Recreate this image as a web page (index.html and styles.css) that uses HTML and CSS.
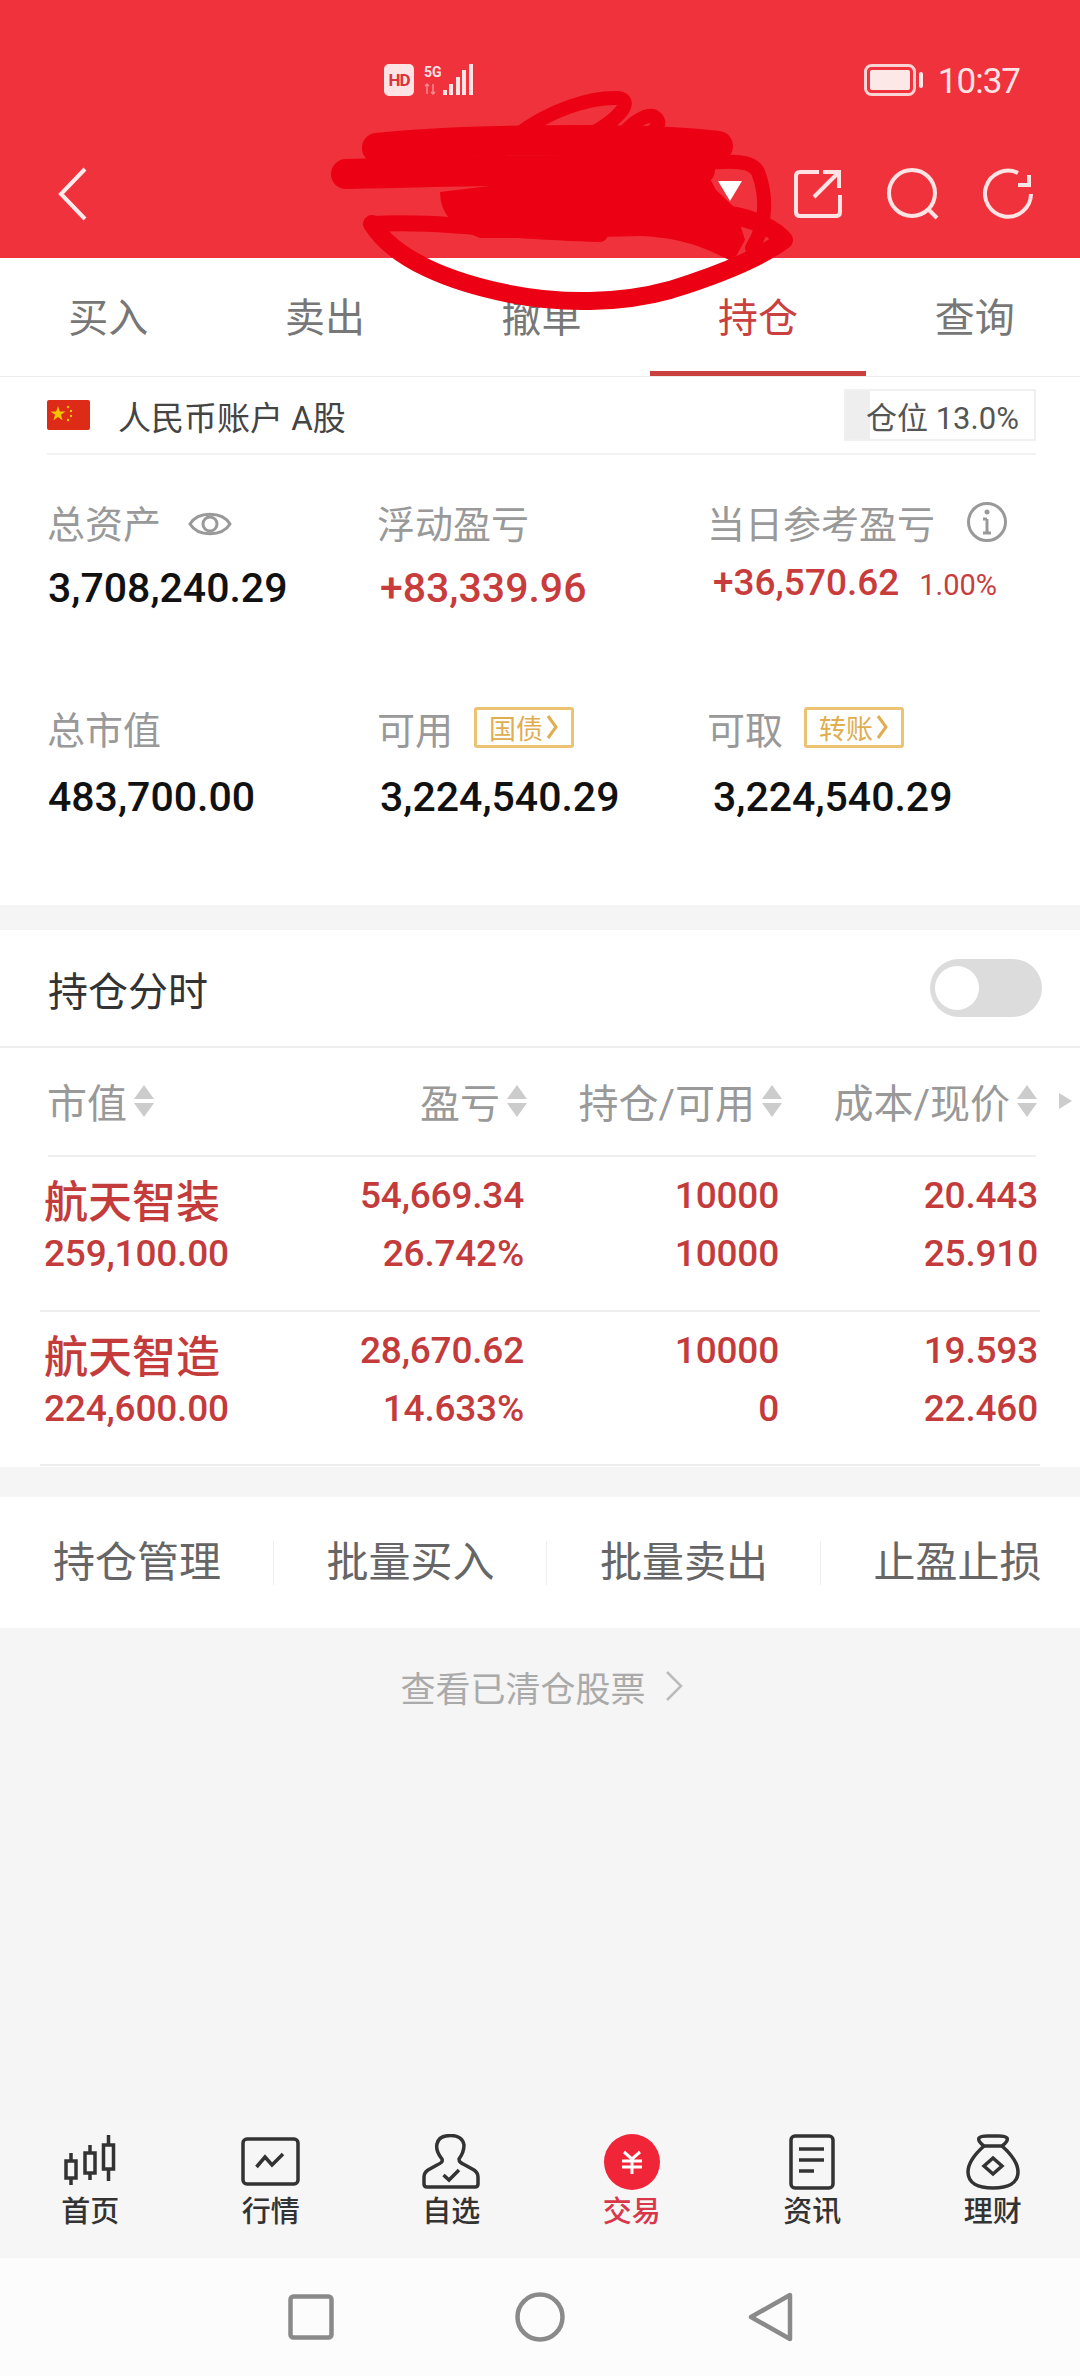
FILE: index.html
```html
<!DOCTYPE html>
<html lang="zh-CN">
<head>
    <meta charset="UTF-8">
    <meta name="viewport" content="width=device-width, initial-scale=1.0">
    <title>持仓</title>
    <link rel="stylesheet" href="styles.css">
</head>
<body>
    <div id="page">
        <div class="top-red">
            <div class="status-bar">
                <div class="status-center">
                    <span class="hd-badge">HD</span>
                    <svg class="signal" width="52" height="34" viewBox="0 0 52 34">
                        <text class="signal-text" x="2" y="13">5G</text>
                        <path class="signal-arrows" d="M5 20v10M3 22l2-2 2 2M11 20v10M9 28l2 2 2-2"/>
                        <rect class="signal-bar" x="21" y="26" width="4" height="5"/>
                        <rect class="signal-bar" x="27" y="20" width="4" height="11"/>
                        <rect class="signal-bar" x="34" y="13" width="4" height="18"/>
                        <rect class="signal-bar" x="40" y="6" width="4" height="25"/>
                        <rect class="signal-bar" x="47" y="0" width="4" height="31"/>
                    </svg>
                </div>
                <div class="status-right">
                    <svg width="60" height="32" viewBox="0 0 60 32">
                        <rect class="battery-frame" x="1.5" y="1.5" width="49" height="29" rx="6"/>
                        <rect class="battery-fill" x="6" y="6" width="40" height="20" rx="2"/>
                        <rect class="battery-fill" x="55" y="8" width="4" height="16" rx="2"/>
                    </svg>
                    <span class="clock">10:37</span>
                </div>
            </div>
            <div class="title-bar">
                <svg class="back-icon" width="32" height="54" viewBox="0 0 32 54">
                    <path d="M28 2 L4 27 L28 52"/>
                </svg>
                <svg class="caret-icon" width="26" height="20" viewBox="0 0 26 20">
                    <path d="M1 0 H25 L13 20 Z"/>
                </svg>
                <div class="title-actions">
                    <svg width="50" height="50" viewBox="0 0 50 50">
                        <path d="M26 3 H7 Q3 3 3 7 V43 Q3 47 7 47 H43 Q47 47 47 43 V26"/>
                        <path d="M21 28 L46 3 M30 3 H46 V19"/>
                    </svg>
                    <svg width="52" height="52" viewBox="0 0 52 52">
                        <circle cx="25" cy="25" r="23"/>
                        <path d="M41 41 L50 50"/>
                    </svg>
                    <svg width="50" height="52" viewBox="0 0 50 52">
                        <path d="M35 5 A23 23 0 1 0 48 26"/>
                        <path d="M46 7 V17 H35"/>
                    </svg>
                </div>
            </div>
        </div>

        <div class="tabs">
            <div class="tab">买入</div>
            <div class="tab">卖出</div>
            <div class="tab">撤单</div>
            <div class="tab tab-active">持仓</div>
            <div class="tab">查询</div>
        </div>

        <div class="summary">
            <div class="account-row">
                <svg class="flag" width="43" height="30" viewBox="0 0 43 30">
                    <rect width="43" height="30" rx="2" fill="#de2b17"/>
                    <path d="M11 6 L12.8 11.4 L18.5 11.4 L13.9 14.8 L15.6 20.2 L11 16.9 L6.4 20.2 L8.1 14.8 L3.5 11.4 L9.2 11.4 Z" fill="#f5c400"/>
                    <circle cx="21" cy="7" r="1.2" fill="#f5c400"/>
                    <circle cx="24" cy="11" r="1.2" fill="#f5c400"/>
                    <circle cx="24" cy="16" r="1.2" fill="#f5c400"/>
                    <circle cx="21" cy="20" r="1.2" fill="#f5c400"/>
                </svg>
                <span class="account-name">人民币账户 A股</span>
                <div class="position-box">
                    <div class="position-fill" style="width: 13%"></div>
                    <span class="position-text">仓位 13.0%</span>
                </div>
            </div>

            <div class="stats">
                <div class="stat">
                    <div class="stat-label">总资产
                        <svg class="eye-icon" width="44" height="32" viewBox="0 0 44 32">
                            <path d="M2 16 C10 3 34 3 42 16 C34 29 10 29 2 16 Z"/>
                            <circle cx="22" cy="16" r="7"/>
                        </svg>
                    </div>
                    <div class="stat-value">3,708,240.29</div>
                </div>
                <div class="stat">
                    <div class="stat-label">浮动盈亏</div>
                    <div class="stat-value red">+83,339.96</div>
                </div>
                <div class="stat">
                    <div class="stat-label">当日参考盈亏
                        <svg class="info-icon" width="42" height="42" viewBox="0 0 42 42">
                            <circle cx="21" cy="21" r="18.5"/>
                            <path d="M21 18 V32 M17 18 H21 M17 32 H25"/>
                            <circle class="info-dot" cx="21" cy="11" r="2.5"/>
                        </svg>
                    </div>
                    <div class="stat-value red stat-value-small">+36,570.62<span class="stat-pct">1.00%</span></div>
                </div>
                <div class="stat">
                    <div class="stat-label">总市值</div>
                    <div class="stat-value">483,700.00</div>
                </div>
                <div class="stat">
                    <div class="stat-label">可用<span class="gold-tag">国债<svg width="12" height="26" viewBox="0 0 12 26"><path d="M2 2 L10 13 L2 24"/></svg></span></div>
                    <div class="stat-value">3,224,540.29</div>
                </div>
                <div class="stat">
                    <div class="stat-label">可取<span class="gold-tag">转账<svg width="12" height="26" viewBox="0 0 12 26"><path d="M2 2 L10 13 L2 24"/></svg></span></div>
                    <div class="stat-value">3,224,540.29</div>
                </div>
            </div>
        </div>

        <div class="gap-band"></div>

        <div class="holdings">
            <div class="toggle-row">
                <span class="toggle-label">持仓分时</span>
                <div class="toggle"><div class="toggle-knob"></div></div>
            </div>

            <div class="table-head">
                <div class="head-cell head-left">市值<span class="sort"></span></div>
                <div class="head-cell">盈亏<span class="sort"></span></div>
                <div class="head-cell">持仓/可用<span class="sort"></span></div>
                <div class="head-cell">成本/现价<span class="sort"></span></div>
                <div class="head-more"></div>
            </div>
            <div class="head-line"></div>

            <div class="stock-row">
                <div class="cell-name">
                    <div class="stock-name">航天智装</div>
                    <div>259,100.00</div>
                </div>
                <div class="cell-num"><div>54,669.34</div><div>26.742%</div></div>
                <div class="cell-num"><div>10000</div><div>10000</div></div>
                <div class="cell-num"><div>20.443</div><div>25.910</div></div>
            </div>
            <div class="stock-row">
                <div class="cell-name">
                    <div class="stock-name">航天智造</div>
                    <div>224,600.00</div>
                </div>
                <div class="cell-num"><div>28,670.62</div><div>14.633%</div></div>
                <div class="cell-num"><div>10000</div><div>0</div></div>
                <div class="cell-num"><div>19.593</div><div>22.460</div></div>
            </div>
        </div>

        <div class="gap-band gap-band-low"></div>

        <div class="actions">
            <div class="action">持仓管理</div>
            <div class="action">批量买入</div>
            <div class="action">批量卖出</div>
            <div class="action action-last">止盈止损</div>
        </div>

        <div class="filler">
            <div class="cleared-link">查看已清仓股票
                <svg width="20" height="32" viewBox="0 0 20 32"><path d="M3 2 L17 16 L3 30"/></svg>
            </div>
        </div>

        <div class="bottom-nav">
            <div class="nav-item">
                <svg class="nav-icon" width="60" height="56" viewBox="0 0 60 56">
                    <path d="M11 19 V51 M30 11 V46 M48.5 1 V47"/>
                    <rect x="6" y="27" width="10" height="17" fill="#f6f6f6"/>
                    <rect x="25" y="19" width="10" height="20" fill="#f6f6f6"/>
                    <rect x="43.5" y="11" width="10" height="24" fill="#f6f6f6"/>
                </svg>
                <span class="nav-label">首页</span>
            </div>
            <div class="nav-item">
                <svg class="nav-icon" width="60" height="56" viewBox="0 0 60 56">
                    <rect x="2" y="5" width="55" height="45" rx="4"/>
                    <path d="M15.5 33 L24 23 L31 31 L42 20"/>
                </svg>
                <span class="nav-label">行情</span>
            </div>
            <div class="nav-item">
                <svg class="nav-icon" width="60" height="56" viewBox="0 0 60 56">
                    <path d="M21 25 C17 20 15 14 16 10 C17 4 23 1.5 30 1.5 C37 1.5 42 5 43 11 C43 16 41 21 38 25 C38 28 40 29 44 31 L53 36 C56 38 57 40 57 43 V50 Q57 53 54 53 H6 Q3 53 3 50 V43 C3 40 4 38 7 36 L16 31 C20 29 22 28 21 25 Z"/>
                    <path d="M22.5 41 L28 46 L38 36"/>
                </svg>
                <span class="nav-label">自选</span>
            </div>
            <div class="nav-item">
                <svg class="nav-icon nav-icon-trade" width="60" height="56" viewBox="0 0 60 56">
                    <circle cx="30" cy="28" r="28"/>
                    <path d="M22 18 L30 25 L38 18 M20 27 H40 M20 33 H40 M30 25 V40"/>
                </svg>
                <span class="nav-label nav-label-active">交易</span>
            </div>
            <div class="nav-item">
                <svg class="nav-icon" width="60" height="56" viewBox="0 0 60 56">
                    <rect x="9" y="2" width="42" height="52" rx="4"/>
                    <path d="M17 15 H42 M17 26 H42 M17 37 H32"/>
                </svg>
                <span class="nav-label">资讯</span>
            </div>
            <div class="nav-item">
                <svg class="nav-icon" width="60" height="56" viewBox="0 0 60 56">
                    <path d="M21 12 C17 9 15 6 16 4 C18 1 24 2 30 2 C36 2 42 1 44 4 C45 6 43 9 39 12 Z"/>
                    <path d="M21 12 C12 20 5 28 5 38 C5 49 15 54 30 54 C45 54 55 49 55 38 C55 28 48 20 39 12"/>
                    <path d="M30 24 L39 32 L30 40 L21 32 Z"/>
                </svg>
                <span class="nav-label">理财</span>
            </div>
        </div>

        <div class="system-nav">
            <div class="system-cell">
                <svg width="46" height="46" viewBox="0 0 46 46"><rect x="2.5" y="2.5" width="41" height="41" rx="3"/></svg>
            </div>
            <div class="system-cell">
                <svg width="50" height="50" viewBox="0 0 50 50"><circle cx="25" cy="25" r="22.5"/></svg>
            </div>
            <div class="system-cell">
                <svg class="system-back" width="46" height="50" viewBox="0 0 46 50"><path d="M42 3 V47 L3 25 Z"/></svg>
            </div>
        </div>

        <!-- the hand scribble that covers the account name -->
        <svg class="scribble" width="1080" height="320" viewBox="0 0 1080 320">
            <path class="scribble-fill" d="M440 192 L700 160 L716 190 L735 208 L745 240 L733 262 C700 245 680 238 640 236 L560 238 L480 238 Q440 224 440 192 Z"/>
            <path stroke-width="30" d="M377 148 C450 140 640 136 718 146"/>
            <path stroke-width="30" d="M346 174 C420 172 620 168 700 170"/>
            <path stroke-width="14" d="M700 164 C730 160 752 160 758 172 C767 195 767 225 752 248"/>
            <path stroke-width="18" d="M372 224 C395 260 450 282 510 294 C560 304 620 304 670 290 C715 276 760 258 784 240 C775 228 750 218 730 215"/>
            <path stroke-width="16" d="M372 224 C440 220 500 232 600 234"/>
            <path stroke-width="14" d="M517 135 C550 110 590 97 618 98 C632 100 625 115 590 135"/>
            <path stroke-width="14" d="M625 132 C635 120 650 112 656 118 C664 125 650 135 636 140"/>
        </svg>
    </div>
</body>
</html>
```

FILE: styles.css
```css
* {
    box-sizing: border-box;
}
body {
    margin: 0;
    font-family: Roboto, "Noto Sans CJK SC", sans-serif;
    background-color: #f5f5f5;
}
svg {
    display: block;
    flex: none;
}
#page {
    position: relative;
    width: 1080px;
    height: 2376px;
    display: flex;
    flex-direction: column;
    overflow: hidden;
}
.red {
    color: #c93c3c !important;
}

/* header */
.top-red {
    height: 258px;
    background-color: #ef323c;
    padding-top: 64px;
}
.status-bar {
    height: 32px;
    display: flex;
    justify-content: space-between;
    padding: 0 60px 0 384px;
}
.status-center {
    display: flex;
    gap: 8px;
}
.hd-badge {
    width: 30px;
    height: 32px;
    border-radius: 5px;
    background-color: #fde3e3;
    color: #d9343c;
    font-size: 17px;
    font-weight: 700;
    line-height: 32px;
    text-align: center;
    letter-spacing: -1px;
}
.signal-text {
    font-family: Roboto, sans-serif;
    font-size: 14px;
    font-weight: 700;
    fill: #fde3e3;
}
.signal-arrows {
    fill: none;
    stroke: #f78b90;
    stroke-width: 1.5;
}
.signal-bar {
    fill: #fde3e3;
}
.status-right {
    display: flex;
    align-items: center;
    gap: 14px;
}
.battery-frame {
    fill: none;
    stroke: #fbd3d5;
    stroke-width: 3;
}
.battery-fill {
    fill: #fde8e8;
}
.clock {
    margin-top: 4px;
    color: #fde3e3;
    font-size: 35px;
    line-height: 32px;
    letter-spacing: -1px;
}
.title-bar {
    height: 56px;
    margin-top: 70px;
    padding: 0 52px 0 57px;
    display: flex;
    align-items: center;
}
.back-icon path {
    fill: none;
    stroke: #fdeaea;
    stroke-width: 4;
}
.caret-icon {
    margin-left: 628px;
    margin-top: -6px;
}
.caret-icon path {
    fill: #fff;
}
.title-actions {
    margin-left: 50px;
    display: flex;
    align-items: center;
    gap: 44px;
}
.title-actions path,
.title-actions circle {
    fill: none;
    stroke: #fde3e3;
    stroke-width: 4;
}

/* tabs */
.tabs {
    height: 119px;
    display: flex;
    margin-right: -3px;
    background-color: #fff;
    border-bottom: 1px solid #eee;
}
.tab {
    flex: 1;
    text-align: center;
    font-size: 40px;
    line-height: 122px;
    color: #777;
}
.tab-active {
    color: #c9403f;
    border-bottom: 5px solid #c9403f;
}

/* account and totals */
.summary {
    height: 528px;
    background-color: #fff;
}
.account-row {
    height: 78px;
    margin: 0 44px 0 47px;
    display: flex;
    align-items: center;
    border-bottom: 2px solid #f2f2f2;
}
.account-name {
    margin-left: 28px;
    padding-top: 2px;
    font-size: 33px;
    color: #444;
}
.position-box {
    position: relative;
    width: 192px;
    height: 52px;
    margin-left: auto;
    border: 2px solid #f0f0f0;
    display: flex;
    align-items: center;
    padding-left: 20px;
}
.position-fill {
    position: absolute;
    top: 0;
    bottom: 0;
    left: 0;
    background-color: #eee;
}
.position-text {
    position: relative;
    font-size: 31px;
    color: #555;
    white-space: nowrap;
}
.stats {
    display: grid;
    grid-template-columns: 330px 330px 330px;
    grid-auto-rows: 206px;
    padding: 41px 0 0 47px;
}
.stat-label {
    height: 50px;
    display: flex;
    align-items: center;
    font-size: 38px;
    color: #999;
}
.stat-value {
    margin-top: 12px;
    margin-left: 1px;
    font-size: 41px;
    line-height: 60px;
    font-weight: 500;
    color: #111;
    white-space: nowrap;
}
.stat:nth-child(3n+2) .stat-value {
    margin-left: 3px;
}
.stat:nth-child(3n) .stat-value {
    margin-left: 6px;
}
.stat:nth-child(n+4) .stat-value {
    margin-top: 15px;
}
.stat .stat-value-small {
    font-size: 37px;
    margin-top: 7px;
    margin-left: 8px;
}
.stat-pct {
    margin-left: 20px;
    font-size: 29px;
    font-weight: 400;
}
.eye-icon {
    margin-left: 27px;
    margin-top: 5px;
}
.eye-icon path,
.eye-icon circle {
    fill: none;
    stroke: #999;
    stroke-width: 3;
}
.info-icon {
    margin-left: 31px;
    margin-top: 2px;
}
.info-icon circle,
.info-icon path {
    fill: none;
    stroke: #999;
    stroke-width: 3;
}
.info-icon .info-dot {
    fill: #999;
    stroke: none;
}
.gold-tag {
    margin-left: 21px;
    width: 100px;
    height: 41px;
    display: flex;
    align-items: center;
    gap: 3px;
    padding-left: 12px;
    border: 3px solid #ecc273;
    border-radius: 3px;
    font-size: 27px;
    color: #e0ad50;
}
.gold-tag path {
    fill: none;
    stroke: #e0ad50;
    stroke-width: 3;
}

.gap-band {
    height: 25px;
    flex: none;
    background-color: #f5f5f5;
}
.gap-band-low {
    height: 30px;
}

/* holdings table */
.holdings {
    height: 537px;
    background-color: #fff;
}
.toggle-row {
    height: 118px;
    padding: 0 38px 0 48px;
    display: flex;
    align-items: center;
    justify-content: space-between;
    border-bottom: 2px solid #eee;
}
.toggle-label {
    padding-top: 2px;
    font-size: 40px;
    color: #333;
}
.toggle {
    width: 112px;
    height: 58px;
    padding: 7px 5px;
    border-radius: 29px;
    background-color: #dcdcdc;
}
.toggle-knob {
    width: 44px;
    height: 44px;
    border-radius: 50%;
    background-color: #fff;
}
.table-head {
    height: 105px;
    padding: 0 8px 0 47px;
    display: grid;
    grid-template-columns: 200px 280px 255px 255px 35px;
    align-items: center;
}
.head-cell {
    display: flex;
    align-items: center;
    justify-content: flex-end;
    font-size: 40px;
    color: #999;
    white-space: nowrap;
}
.head-left {
    justify-content: flex-start;
}
.sort {
    position: relative;
    width: 20px;
    height: 32px;
    margin-left: 7px;
    flex: none;
}
.sort::before,
.sort::after {
    content: "";
    position: absolute;
    left: 0;
    border-left: 10px solid transparent;
    border-right: 10px solid transparent;
}
.sort::before {
    top: 0;
    border-bottom: 14px solid #ccc;
}
.sort::after {
    bottom: 0;
    border-top: 14px solid #ccc;
}
.head-more {
    justify-self: end;
    width: 0;
    height: 0;
    border-top: 8px solid transparent;
    border-bottom: 8px solid transparent;
    border-left: 13px solid #ccc;
}
.head-line {
    height: 2px;
    margin: 2px 44px 0 48px;
    background-color: #eee;
}
.stock-row {
    height: 155px;
    margin: 0 40px;
    padding: 10px 3px 0 4px;
    display: grid;
    grid-template-columns: 200px 280px 255px 259px;
    border-bottom: 2px solid #eee;
    font-size: 37px;
    font-weight: 500;
    line-height: 58px;
    letter-spacing: -0.2px;
    color: #c43b3b;
}
.stock-row:last-child {
    height: 154px;
}
.cell-num {
    text-align: right;
}
.stock-name {
    height: 58px;
    padding-top: 7px;
    font-size: 44px;
    letter-spacing: 0;
}

/* buttons under the table */
.actions {
    height: 131px;
    flex: none;
    display: grid;
    grid-template-columns: 273.5px 273.5px 273.5px 1fr;
    align-items: center;
    background-color: #fff;
}
.action {
    height: 44px;
    padding-left: 53px;
    border-right: 1px solid #eee;
    font-size: 42px;
    line-height: 44px;
    color: #666;
    white-space: nowrap;
}
.action-last {
    border-right: none;
}
.filler {
    flex: 1;
    padding-top: 33px;
}
.cleared-link {
    display: flex;
    justify-content: center;
    align-items: center;
    gap: 18px;
    height: 50px;
    padding-left: 4px;
    font-size: 35px;
    color: #aaa;
}
.cleared-link path {
    fill: none;
    stroke: #bbb;
    stroke-width: 2.5;
}

/* bottom navigation */
.bottom-nav {
    height: 138px;
    flex: none;
    display: flex;
    margin-right: -3px;
    padding-top: 14px;
    background-color: #f6f6f6;
}
.nav-item {
    flex: 1;
    display: flex;
    flex-direction: column;
    align-items: center;
}
.nav-icon * {
    fill: none;
    stroke: #333;
    stroke-width: 3.5;
}
.nav-icon rect[fill] {
    fill: #f6f6f6;
}
.nav-icon-trade circle {
    fill: #f02638;
    stroke: none;
}
.nav-icon-trade path {
    stroke: #fff;
    stroke-width: 3;
}
.nav-label {
    margin-top: 6px;
    font-size: 29px;
    font-weight: 500;
    line-height: 32px;
    color: #333;
}
.nav-label-active {
    color: #d9364a;
}
.system-nav {
    height: 118px;
    flex: none;
    display: flex;
    justify-content: center;
    align-items: center;
    background-color: #fcfcfc;
}
.system-cell {
    width: 229px;
    display: flex;
    justify-content: center;
}
.system-cell rect,
.system-cell circle,
.system-cell path {
    fill: none;
    stroke: #8a8a8a;
    stroke-width: 4.5;
    stroke-linejoin: round;
}
.system-back {
    margin-left: 3px;
}

/* scribble over the title */
.scribble {
    position: absolute;
    top: 0;
    left: 0;
}
.scribble path {
    fill: none;
    stroke: #ec0013;
    stroke-linecap: round;
    stroke-linejoin: round;
}
.scribble .scribble-fill {
    fill: #ec0013;
    stroke: none;
}
```
